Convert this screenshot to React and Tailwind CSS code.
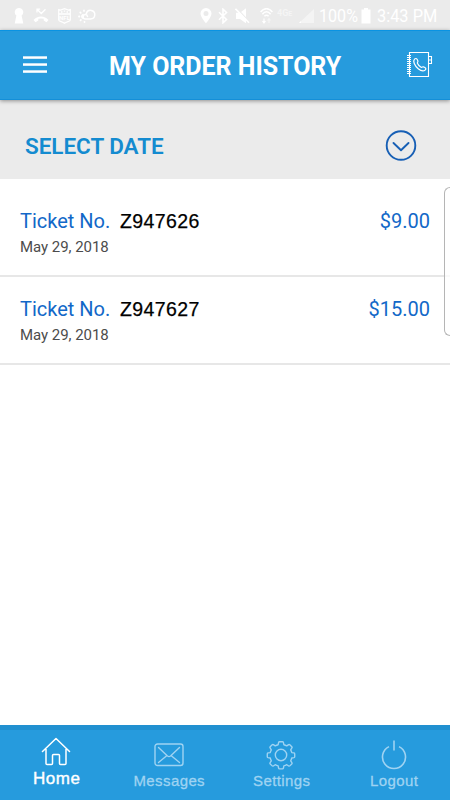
import React from 'react';

const stroke = { fill: 'none', stroke: 'currentColor', strokeLinecap: 'round', strokeLinejoin: 'round' };

function KeyholeIcon() {
  return (
    <svg width="10" height="16" viewBox="0 0 10 16" fill="white">
      <path d="M5 0a4.200 4.200 0 0 1 2.600 7.500L9.300 15.500H.700L2.400 7.500A4.200 4.200 0 0 1 5 0Z" />
    </svg>
  );
}

function MissedCallIcon() {
  return (
    <svg width="16" height="15" viewBox="0 0 16 15" fill="none" stroke="white">
      <path d="M4 4.500V1.200h3.200M4.300 1.500l4 4L12.500 1.300" strokeWidth="1.300" />
      <path d="M8 8.500c3 0 5.500 1.200 7.500 3.500l-2 2.300-2.800-1.800v-1.700a9 9 0 0 0-5.400 0v1.700L2.500 14.300l-2-2.300C2.500 9.700 5 8.500 8 8.500Z" fill="white" stroke="none" />
    </svg>
  );
}

function ShieldIcon() {
  return (
    <div className="relative h-4 w-[13px]">
      <svg width="13" height="16" viewBox="0 0 13 16" fill="none" stroke="white">
        <path d="M.7 1.500l2 .5L6.500.7l3.800 1.300 2-.5v10.500c0 1.500-3.800 1.500-5.800 3.300C4.500 13.500.7 13.500.7 12Z" strokeWidth="1.200" />
        <path d="M1 6h11M3 4h1.500M5.800 3.200h1.400M8.500 4H10" strokeWidth="1.300" />
      </svg>
      <span className="absolute inset-x-0 top-[6px] text-center text-[6px] leading-[7px] font-bold">NFL</span>
    </div>
  );
}

function WeatherIcon() {
  return (
    <svg width="18" height="15" viewBox="0 0 18 15" fill="none" stroke="white" strokeWidth="1.500" strokeLinecap="round">
      <path d="M9.500 8.500a2.200 2.200 0 1 0-2 2.500h5a4.300 4.300 0 1 0-4.200-5.300" />
      <path d="M5 6.500a2.500 2.500 0 0 0-.5 3.500" />
      <path d="M1 8.500h.4M2.300 4.500l.4.400M6 2.500v.4M2.500 12.300l.4-.4M6.500 14v-.2" strokeWidth="1.800" />
    </svg>
  );
}

function PinIcon() {
  return (
    <svg width="12" height="16" viewBox="0 0 12 16" fill="white">
      <path fillRule="evenodd" d="M6 0a5.500 5.500 0 0 1 5.500 5.600C11.500 9 6 15.500 6 15.500S.5 9 .5 5.600A5.500 5.500 0 0 1 6 0Zm0 3a2.500 2.500 0 1 0 0 5 2.500 2.500 0 0 0 0-5Z" />
    </svg>
  );
}

function BluetoothIcon() {
  return (
    <svg width="10" height="16" viewBox="0 0 10 16" fill="none" stroke="white" strokeWidth="1.600">
      <path d="M1 4.200l7.500 7.300L5 14.800V1.200l3.500 3.300L1 11.800" />
    </svg>
  );
}

function MuteIcon() {
  return (
    <svg width="15" height="16" viewBox="0 0 15 16">
      <path d="M1 4.800h4l6-4.500v15L5 11H1Z" fill="white" />
      <path d="M1.500 0l13 14" stroke="#ebebeb" strokeWidth="1.300" />
      <path d="M.5.800l13.500 14" stroke="white" strokeWidth="1.600" />
    </svg>
  );
}

function WifiIcon() {
  return (
    <svg width="13" height="16" viewBox="0 0 13 16" fill="none" stroke="white" strokeWidth="1.500">
      <path d="M.6 4C4-.5 9-.5 12.400 4M2.400 6.200c2.500-3.300 5.700-3.300 8.200 0M4.400 8.300c1.400-1.500 2.800-1.500 4.200 0" />
      <path d="M4 10.500v4M2.500 13l1.500 2 1.500-2" strokeWidth="1.200" />
      <path d="M9 15v-4M7.500 12.500l1.500-2 1.500 2" strokeWidth="1.200" opacity=".5" />
    </svg>
  );
}

function StatusBar() {
  return (
    <div className="h-[30px] bg-[#ebebeb] font-['Roboto',sans-serif] text-white">
      <div className="flex h-[31px] items-center">
        <div className="ml-[14px]"><KeyholeIcon /></div>
        <div className="ml-[9px]"><MissedCallIcon /></div>
        <div className="ml-[9px]"><ShieldIcon /></div>
        <div className="ml-[7px]"><WeatherIcon /></div>
        <div className="ml-[104px]"><PinIcon /></div>
        <div className="ml-[6px]"><BluetoothIcon /></div>
        <div className="ml-[7px]"><MuteIcon /></div>
        <div className="ml-[10px]"><WifiIcon /></div>
        <span className="mb-[5px] ml-[4px] w-[18px] text-[9px] leading-none font-bold whitespace-nowrap opacity-50">4G<span className="text-[7px]">E</span></span>
        <svg className="ml-[3px]" width="17" height="16" viewBox="0 0 17 16">
          <path d="M16 1v14H1Z" fill="white" opacity=".45" />
          <path d="M3 13v2H1Z" fill="white" />
        </svg>
        <span className="ml-[4px] w-[41px] origin-left scale-x-[.87] pt-[2px] text-[18.500px] leading-none whitespace-nowrap">100%</span>
        <svg className="ml-[1px]" width="10" height="16" viewBox="0 0 10 16" fill="white">
          <path d="M3 0h4v1.500h2.500v14H.5v-14H3Z" />
        </svg>
        <span className="ml-[6px] origin-left scale-x-[.885] pt-[2px] text-[18.500px] leading-none whitespace-nowrap">3:43 PM</span>
      </div>
    </div>
  );
}

function MenuIcon() {
  return (
    <svg width="24" height="18" viewBox="0 0 24 18" fill="white">
      <rect y="0.300" width="24" height="2.500" />
      <rect y="7.300" width="24" height="2.500" />
      <rect y="14.300" width="24" height="2.500" />
    </svg>
  );
}

function ContactBookIcon() {
  return (
    <svg width="27" height="28" viewBox="0 0 27 28" fill="none" stroke="white">
      <path d="M3.500 1.500h19v24h-19Z" strokeWidth="1.100" />
      <path d="M1 4.500h4M1 6.500h4M1 8.500h4M1 10.500h4M1 12.500h4M1 14.500h4M1 16.500h4M1 18.500h4M1 20.500h4M1 22.500h4" strokeWidth="1" />
      <path d="M22.500 5.500h3v7h-3M22.500 9h3" strokeWidth="1.100" />
      <path d="M8.500 8.200c1-1 2-.9 2.600.1l.8 1.600c.4 1-.9 1.400-.5 2.300.8 1.800 2 3 3.700 4 1 .5 1.400-.7 2.400-.4l1.700 1c.9.6.8 1.500-.1 2.300-1.500 1.300-4 1-6.900-1.400-3.700-3.100-5.600-7.500-3.700-9.500Z" strokeWidth="1.200" />
    </svg>
  );
}

function Header() {
  return (
    <header className="relative z-10 flex h-[70px] items-center border-t border-b border-t-[#0a93e2] border-b-[#148fd8] bg-[#269bdd] shadow-[0_1px_4px_rgba(0,0,0,0.4)]">
      <div className="ml-[23px]"><MenuIcon /></div>
      <h1 className="ml-[62px] w-[233px] pt-[2px] text-[25px] leading-none font-bold tracking-[-0.03px] whitespace-nowrap text-white">MY ORDER HISTORY</h1>
      <div className="ml-[64px]"><ContactBookIcon /></div>
    </header>
  );
}

function DateSelector() {
  return (
    <div className="flex h-[79px] items-center justify-between bg-[#ebebeb] pt-[12px] pr-[33px] pl-[25px]">
      <span className="pt-[2px] text-[22.500px] leading-none font-semibold tracking-[-0.05px] text-[#148bd0]">SELECT DATE</span>
      <svg width="32" height="32" viewBox="0 0 32 32" className="text-[#175fb5]" {...stroke}>
        <circle cx="16" cy="15.500" r="14.300" strokeWidth="1.900" />
        <path d="M8.500 13l7.500 7.200 7.500-7.200" strokeWidth="1.900" />
      </svg>
    </div>
  );
}

const tickets = [
  { number: 'Z947626', date: 'May 29, 2018', price: '$9.00' },
  { number: 'Z947627', date: 'May 29, 2018', price: '$15.00' },
];

function Ticket({ number, date, price }) {
  return (
    <li className="h-[88px] border-b-2 border-[#e7e7e7] px-5 pt-[20px]">
      <div className="flex items-baseline leading-6">
        <span className="w-[100px] text-[20px] whitespace-nowrap text-[#1268c8]">Ticket No.</span>
        <span className="font-['Liberation_Sans',sans-serif] text-[19.500px] tracking-[0.4px] text-black [-webkit-text-stroke:0.250px_black]">{number}</span>
        <span className="ml-auto text-[20px] text-[#1268c8]">{price}</span>
      </div>
      <div className="mt-[4px] text-[15px] leading-5 tracking-[-0.04px] text-[#4c4c4c]">{date}</div>
    </li>
  );
}

function HomeIcon() {
  return (
    <svg width="30" height="30" viewBox="0 0 30 30" {...stroke} strokeWidth="1.500">
      <path d="M1.500 14.500L15 1.500l13.500 13M5 12v14.500a1 1 0 0 0 1 1h4.500a1 1 0 0 0 1-1v-8a1 1 0 0 1 1-1h5a1 1 0 0 1 1 1v8a1 1 0 0 0 1 1H24a1 1 0 0 0 1-1V12" />
    </svg>
  );
}

function MailIcon() {
  return (
    <svg width="30" height="24" viewBox="0 0 30 24" {...stroke} strokeWidth="1.400">
      <rect x="1" y="1" width="28" height="21.500" rx="2.500" />
      <path d="M4.500 4.500l9 8.500q1.500 1.200 3 0l9-8.500M4.500 19.500l8.500-7M25.500 19.500l-8.500-7" />
    </svg>
  );
}

function GearIcon() {
  return (
    <svg width="30" height="30" viewBox="0 0 30 30" {...stroke} strokeWidth="1.400">
      <circle cx="15" cy="15" r="5.700" />
      <path d="M13.500 1.500h3q.8 0 1 .8l.4 2.200q1.600.4 3 1.200l1.900-1.300q.7-.4 1.200.1l2 2q.6.6.1 1.300l-1.200 1.900q.7 1.300 1.100 2.800l2.200.4q.8.200.8 1v2.800q0 .8-.8 1l-2.200.4q-.4 1.500-1.100 2.800l1.200 1.900q.5.700-.1 1.300l-2 2q-.5.500-1.200.1l-1.900-1.300q-1.400.8-3 1.200l-.4 2.200q-.2.800-1 .8h-3q-.8 0-1-.8l-.4-2.200q-1.600-.4-3-1.200l-1.900 1.300q-.7.400-1.200-.1l-2-2q-.6-.6-.1-1.300l1.200-1.900q-.7-1.300-1.100-2.800l-2.200-.4q-.8-.2-.8-1v-2.800q0-.8.8-1l2.200-.4q.4-1.500 1.100-2.800L3.900 7.800q-.5-.7.1-1.300l2-2q.5-.5 1.200-.1l1.900 1.300q1.400-.8 3-1.200l.4-2.200q.2-.8 1-.8Z" transform="translate(.3 .3) scale(.98)" />
    </svg>
  );
}

function PowerIcon() {
  return (
    <svg width="28" height="30" viewBox="0 0 28 30" {...stroke} strokeLinecap="butt" strokeWidth="1.600">
      <path d="M9 6.600a11.500 11.500 0 1 0 10 0M14 .5v10" />
    </svg>
  );
}

function Tab({ icon, label, iconClass, labelClass }) {
  return (
    <div className="flex flex-1 flex-col items-center">
      <div className={iconClass}>{icon}</div>
      <span className={labelClass}>{label}</span>
    </div>
  );
}

function TabBar() {
  const idle = 'h-[30px] mt-[10px] flex items-center text-[#9fd3f2]';
  const idleLabel = 'mt-[2px] pl-[1px] text-[15px] leading-[18px] tracking-[0.4px] text-[#9fd3f2] [-webkit-text-stroke:0.3px_#9fd3f2]';
  return (
    <nav className="flex h-[75px] border-t-[5px] border-[#2190d0] bg-[#269bdd] font-['Liberation_Sans',sans-serif]">
      <Tab icon={<HomeIcon />} label="Home" iconClass="mt-[7px] h-[30px] text-white" labelClass="mt-[2px] pl-[1px] text-[17px] leading-5 tracking-[0.6px] text-white [-webkit-text-stroke:0.4px_white]" />
      <Tab icon={<MailIcon />} label="Messages" iconClass={idle} labelClass={idleLabel} />
      <Tab icon={<GearIcon />} label="Settings" iconClass={idle} labelClass={idleLabel} />
      <Tab icon={<PowerIcon />} label="Logout" iconClass={idle} labelClass={idleLabel} />
    </nav>
  );
}

export default function App() {
  return (
    <div className="relative flex h-[800px] w-[450px] flex-col overflow-hidden bg-white font-['Roboto',sans-serif]">
      <StatusBar />
      <Header />
      <DateSelector />
      <ul className="flex-1 pt-[10px]">
        {tickets.map((t) => <Ticket key={t.number} {...t} />)}
      </ul>
      <TabBar />
      <div className="absolute top-[187px] right-0 h-[149px] w-[6px] rounded-l-[6px] border border-r-0 border-[#b5b5b5] bg-white/75" />
    </div>
  );
}
